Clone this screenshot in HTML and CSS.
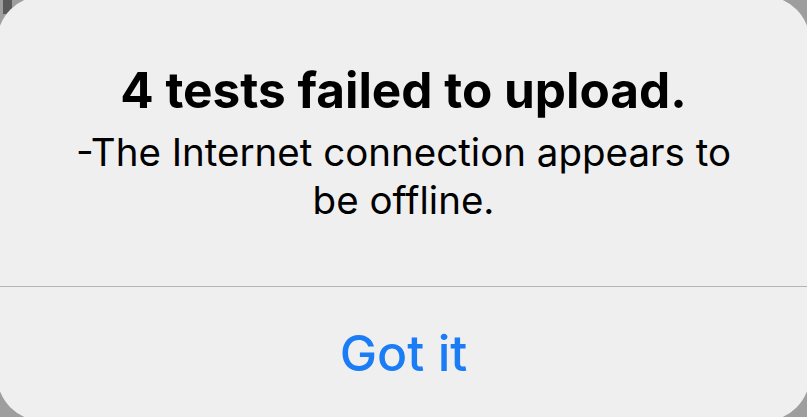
FILE: index.html
```html
<!DOCTYPE html>
<html>
<head>
<meta charset="utf-8">
<link rel="stylesheet" href="styles.css">
</head>
<body>
<div class="stage">
  <div class="backdrop-mark"></div>
  <div class="alert">
    <div class="content">
      <div class="title">4 tests failed to upload.</div>
      <div class="message">-The Internet connection appears to be offline.</div>
    </div>
    <div class="divider"></div>
    <div class="action">Got it</div>
  </div>
</div>
</body>
</html>
```

FILE: styles.css
```css
html, body {
  margin: 0;
  padding: 0;
  width: 807px;
  height: 417px;
  overflow: hidden;
  background: #9e9e9e;
}
.stage {
  width: 807px;
  height: 417px;
  overflow: hidden;
  position: relative;
  background: #9e9e9e;
}
.backdrop-mark {
  position: absolute;
  left: 3px;
  top: 0;
  width: 9px;
  height: 14px;
  background: #5a5a5a;
}
.alert {
  position: relative;
  box-sizing: border-box;
  width: 813px;
  height: 425px;
  margin: -4px 0 0 -3px;
  border-radius: 46px;
  background: #efefef;
  display: flex;
  flex-direction: column;
  font-family: Inter, "Noto Sans", sans-serif;
  color: #000;
}
.content {
  height: 290px;
  box-sizing: border-box;
  padding: 66px 60px 0;
  text-align: center;
}
.title {
  font-size: 49.5px;
  font-weight: 700;
  line-height: 56px;
}
.message {
  margin-top: 10px;
  padding: 0 10px;
  font-size: 38.5px;
  font-weight: 400;
  line-height: 48px;
}
.divider {
  height: 1px;
  background: #b4b4b4;
}
.action {
  flex: 1;
  display: flex;
  justify-content: center;
  padding-top: 36px;
  font-size: 50px;
  font-weight: 500;
  color: #1a7df6;
  line-height: 60px;
}
```
